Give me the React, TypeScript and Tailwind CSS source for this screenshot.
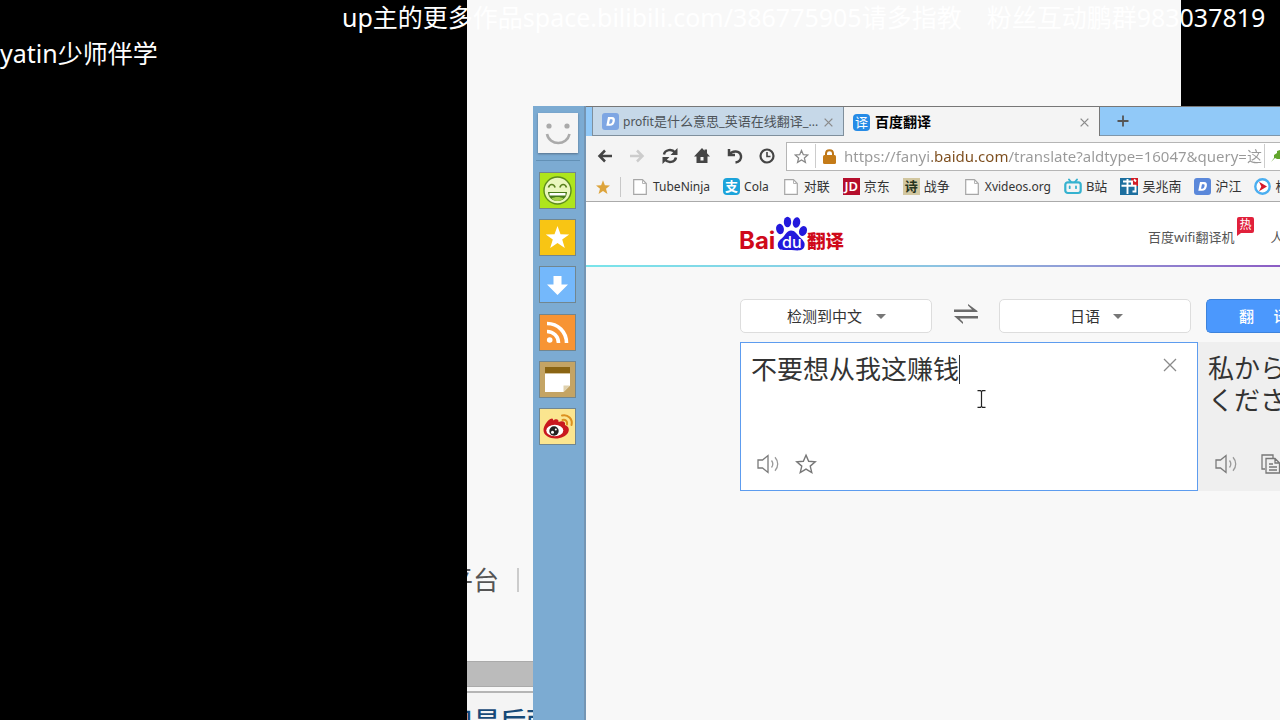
import React from "react";

const CJK = "font-['Noto_Sans','Noto_Sans_CJK_SC',sans-serif]";

function Danmaku({ children, className }: { children: React.ReactNode; className: string }) {
  return (
    <p className={"absolute z-20 flex gap-[25px] whitespace-pre text-[25px] leading-[34px] text-white " + className}>{children}</p>
  );
}

function PageIcon() {
  return (
    <svg width="18" height="16" viewBox="0 0 18 16" className="shrink-0" aria-hidden="true">
      <path d="M2.700.7h8.800l3.800 3.800v10.800H2.700z" fill="#fff" stroke="#a6a6a6" strokeWidth="1.200" />
      <path d="M11.500 .7v3.800h3.800" fill="none" stroke="#b5b5b5" />
    </svg>
  );
}

function HujiangIcon({ faded = false }: { faded?: boolean }) {
  return (
    <svg width="17" height="17" viewBox="0 0 17 17" className="shrink-0" aria-hidden="true">
      <rect width="17" height="17" rx="3" fill={faded ? "#7ea6e3" : "#5b88da"} />
      <path d="M6 4h4c2.400 0 3.300 1.600 2.800 4.200-.6 3-2.200 4.600-4.800 4.600H4.300zM8 6.300 7 10.700h1.300c1.200 0 1.900-.8 2.200-2.400.3-1.400 0-2-1.100-2z" fill="#fff" fillRule="evenodd" />
    </svg>
  );
}

function GlyphIcon({ glyph, className }: { glyph: string; className: string }) {
  return (
    <span aria-hidden="true" className={"flex size-[17px] shrink-0 items-center justify-center overflow-hidden text-[13px] leading-none " + className}>
      {glyph}
    </span>
  );
}

function BiliIcon() {
  return (
    <svg width="18" height="17" viewBox="0 0 18 17" className="shrink-0" fill="none" stroke="#35b2cf" strokeWidth="2.200" strokeLinecap="round" aria-hidden="true">
      <path d="m5 1.500 2 2.500M13 1.500 11 4" strokeWidth="2" />
      <rect x="1.300" y="4.300" width="15.400" height="10.700" rx="2.500" />
      <path d="M5.700 8.500v1.700M12 8.500v1.700" strokeWidth="1.800" />
    </svg>
  );
}

function BookIcon() {
  return (
    <svg width="18" height="17" viewBox="0 0 18 17" className="shrink-0" aria-hidden="true">
      <rect width="18" height="17" fill="#1d6f9f" />
      <path d="M11 0h7v8h-7z" fill="#d11c26" />
      <path d="M3 3.500h9v4M1.500 7.800h14v5.700h-3M7.500 1v15M14 1.500l2 2" fill="none" stroke="#fff" strokeWidth="1.900" />
    </svg>
  );
}

function PlayIcon() {
  return (
    <svg width="17" height="17" viewBox="0 0 17 17" className="shrink-0" aria-hidden="true">
      <circle cx="8.500" cy="8.500" r="7.200" fill="#fff" stroke="#4aaef0" strokeWidth="2.400" />
      <path d="M5 3.800 13 8.500l-8 4.700 2.300-4.700z" fill="#d6182c" />
    </svg>
  );
}

function StarOutline({ size, color, width }: { size: number; color: string; width: number }) {
  return (
    <svg width={size} height={size} viewBox="0 0 24 24" fill="none" stroke={color} strokeWidth={width} aria-hidden="true">
      <path d="m12 2.300 2.900 6.700 7.200.6-5.500 4.700 1.700 7.100-6.300-3.800-6.300 3.800 1.700-7.100L1.900 9.600l7.200-.6z" />
    </svg>
  );
}

function Speaker() {
  return (
    <svg width="22" height="20" viewBox="0 0 22 20" fill="none" stroke="#7a7a7a" strokeWidth="1.300" aria-hidden="true">
      <path d="M1 6h4.500L11 1.500v17L5.500 14H1z" />
      <path d="M14.500 6.500c1.600 2.100 1.600 4.900 0 7M18 3.200c3.600 4 3.600 9.600 0 13.600" stroke="#999" />
    </svg>
  );
}

function CloseIcon({ size, width }: { size: number; width: number }) {
  return (
    <svg width={size} height={size} viewBox="0 0 14 14" stroke="#8a8a8a" strokeWidth={width} aria-hidden="true">
      <path d="m1 1 12 12M13 1 1 13" />
    </svg>
  );
}

function SideButton({ label, className, children }: { label: string; className: string; children: React.ReactNode }) {
  return (
    <button aria-label={label} className={"flex size-[37px] items-center justify-center border border-[#71868f] " + className}>
      <svg width="35" height="35" viewBox="0 0 35 35" aria-hidden="true">{children}</svg>
    </button>
  );
}

function Sidebar() {
  return (
    <aside className="flex w-[53px] shrink-0 flex-col items-center border-r-2 border-[#7495b3] bg-[#7cabd2] pt-[7px] pr-[2px]">
      <button aria-label="账户" className="size-10 bg-[#f5f5f5] shadow-[0_1px_2px_#55708a]">
        <svg width="40" height="40" viewBox="0 0 40 40" aria-hidden="true">
          <circle cx="11" cy="13" r="2.600" fill="#aaa" />
          <circle cx="29" cy="13" r="2.600" fill="#aaa" />
          <path d="M9 21c2.500 12 20 12 22.500 0" fill="none" stroke="#aaa" strokeWidth="2.600" />
        </svg>
      </button>
      <hr className="mt-[7px] w-11 border-[#6290b5]" />
      <nav aria-label="侧边栏" className="mt-[11px] flex h-[273px] flex-col justify-between">
        <SideButton label="表情" className="bg-[#aee51d]">
          <circle cx="17.500" cy="17.500" r="13.500" fill="#eaf7be" stroke="#5d8c1c" strokeWidth="1.400" />
          <path d="M8.500 14.500c1.200-4 5.400-4 6.600 0M19.900 14.500c1.200-4 5.400-4 6.600 0" fill="none" stroke="#58801c" strokeWidth="1.600" />
          <path d="M8 19h19c-.5 12-18.500 12-19 0z" fill="#477a18" />
          <path d="M9.500 20h16v2.500h-16z" fill="#fff" />
          <path d="M11.500 25.500c3-2 9-2 12 0-3 3.200-9 3.200-12 0z" fill="#a5d14a" />
        </SideButton>
        <SideButton label="收藏" className="bg-[#f8c514]">
          <path d="m17.500 6 3 8.200 8.700.2-7 5.200 2.600 8.400-7.300-5-7.300 5 2.600-8.400-7-5.200 8.700-.2z" fill="#fff" />
        </SideButton>
        <SideButton label="下载" className="bg-[#74b8fb]">
          <path d="M13.500 9h8v8.500h6.500L17.500 28 7 17.500h6.500z" fill="#fff" />
        </SideButton>
        <SideButton label="订阅" className="bg-[#f79434]">
          <circle cx="9.700" cy="25" r="2.800" fill="#fff" />
          <path d="M7 16.500c6.500 0 11.500 5 11.500 11.500M7 8.500c11 0 19.500 8.500 19.500 19.500" fill="none" stroke="#fff" strokeWidth="3.600" />
        </SideButton>
        <SideButton label="便签" className="bg-[#c4a464]">
          <path d="M5 5h25v6.500H5z" fill="#8a6412" />
          <path d="M5 11.500h25v12L23.500 30H5z" fill="#fff" />
          <path d="M30 23.500 23.500 30v-6.500z" fill="#dfd1ae" />
        </SideButton>
        <SideButton label="微博" className="bg-[#fbe58f]">
          <path d="M13 11.500c3-2.300 6-1.500 5.500 1.500 4-1.800 7.500-.5 6.500 3 8 3 3 13.500-9.500 13.500-6 0-12-3-12-8.500 0-3.500 4-11 8.500-11.500 1 0 1.300 1 1 2z" fill="#c9181f" />
          <ellipse cx="14.800" cy="21.500" rx="8.500" ry="5.800" fill="#fff" />
          <circle cx="14" cy="22" r="4.700" fill="#222" />
          <circle cx="12.500" cy="23.300" r="1.500" fill="#fff" />
          <circle cx="15.800" cy="20.500" r="1" fill="#fff" />
          <path d="M22 6.500c6-1.500 11 3.500 9.500 9.500M22.500 11c3-.8 5.300 1.500 4.500 4.500" fill="none" stroke="#dc901f" strokeWidth="2" strokeLinecap="round" />
        </SideButton>
      </nav>
    </aside>
  );
}

function Tabs() {
  return (
    <div role="tablist" className="flex h-[30px] border-t border-[#777] bg-[#91c9f8] pl-[6px] text-xs">
      <div className="flex w-[252px] shrink-0 items-center border border-t-0 border-[#7f8f9c] bg-[#c6d8e8] pt-[2px] pr-[10px] pl-[9px]">
        <button role="tab" aria-selected="false" className="flex min-w-0 flex-1 items-center gap-1 text-left text-[#4d5358]">
          <HujiangIcon faded />
          <span className="whitespace-nowrap">profit<span className="text-[13px]">是什么意思_英语在线翻译_</span>...</span>
        </button>
        <button aria-label="关闭标签页"><CloseIcon size={9} width={2} /></button>
      </div>
      <div className="flex w-[256px] shrink-0 items-center border-r border-[#777] bg-[#f4f4f4] pt-[2px] pr-[10px] pl-[9px]">
        <button role="tab" aria-selected="true" className="flex flex-1 items-center gap-[5px] text-left text-[14px] font-bold text-black">
          <GlyphIcon glyph="译" className="rounded-sm bg-[#268be6] font-normal text-white" />
          百度翻译
        </button>
        <button aria-label="关闭标签页"><CloseIcon size={9} width={2} /></button>
      </div>
      <div className="flex flex-1 items-center border-b border-[#7f97ab] pl-[17px]">
        <button aria-label="新建标签页">
          <svg width="12" height="12" viewBox="0 0 12 12" stroke="#555" strokeWidth="1.800" aria-hidden="true"><path d="M6 .5v11M.5 6h11" /></svg>
        </button>
      </div>
    </div>
  );
}

function ToolButton({ label, color = "#444", children }: { label: string; color?: string; children: React.ReactNode }) {
  return (
    <button aria-label={label} className="shrink-0">
      <svg width="16" height="16" viewBox="0 0 16 16" fill="none" stroke={color} strokeWidth="2.500" aria-hidden="true">{children}</svg>
    </button>
  );
}

function Toolbar() {
  return (
    <div className="flex h-10 items-center bg-[#f4f4f4] pl-[11px]">
      <div className="flex w-[189px] shrink-0 justify-between pr-[11px]">
        <ToolButton label="后退"><path d="M15 8H3M8 2.500 2.500 8 8 13.500" /></ToolButton>
        <ToolButton label="前进" color="#ccc"><path d="M1 8h12M8 2.500 13.500 8 8 13.500" /></ToolButton>
        <ToolButton label="刷新">
          <path d="M2 6.500C3 1.500 10 .5 13 4.500M14 9.500c-1 5-8 6-11 2" />
          <path d="M15.500 0v7H8.500zM.5 16V9h7z" fill="#444" stroke="none" />
        </ToolButton>
        <ToolButton label="主页">
          <path d="M8 0 0 8.500h2.500V15h11V8.500H16L13 5.300V1.500h-2.500v1.200zM6.500 9h3v3.500h-3z" fill="#444" fillRule="evenodd" stroke="none" />
        </ToolButton>
        <ToolButton label="撤销"><path d="M2 1v6h6M2.500 6.500C5 2.500 13 2 14 8c.5 3-1.500 6-5.500 6.500" /></ToolButton>
        <ToolButton label="历史记录"><circle cx="8" cy="8" r="6.500" strokeWidth="2.200" /><path d="M8 4v4.500h3.500" strokeWidth="1.600" /></ToolButton>
      </div>
      <div className="flex h-[29px] min-w-0 flex-1 items-center border border-r-0 border-[#b5b5b5] bg-white pl-[7px]">
        <button aria-label="收藏此页" className="mr-[6px] shrink-0"><StarOutline size={15} color="#888" width={2} /></button>
        <span className="mr-[7px] h-6 w-px shrink-0 bg-[#ccc]" />
        <svg width="13" height="15" viewBox="0 0 13 15" className="mr-2 shrink-0" aria-hidden="true">
          <path d="M3 7V4.500c0-4.500 7-4.500 7 0V7" fill="none" stroke="#bd7516" strokeWidth="2" />
          <rect y="6" width="13" height="9" rx="1.500" fill="#c47b18" />
        </svg>
        <input
          aria-label="地址"
          defaultValue="https://fanyi.baidu.com/translate?aldtype=16047&query=这"
          className="min-w-0 flex-1 bg-[linear-gradient(90deg,#999_88px,#7d4d1c_88px,#7d4d1c_165px,#999_165px)] bg-clip-text text-[15px] text-transparent outline-none"
        />
        <span className="h-6 w-px shrink-0 bg-[#ccc]" />
        <svg width="9" height="15" viewBox="0 0 9 15" className="ml-[6px] shrink-0" aria-hidden="true">
          <path d="M0 13 3 9l0-3 3-2 0-2 3-1v9l-3 0-2-1z" fill="#62a52c" />
        </svg>
      </div>
    </div>
  );
}

function Bookmark({ icon, children, cjk = false }: { icon: React.ReactNode; children: React.ReactNode; cjk?: boolean }) {
  return <a href="#" className={"flex shrink-0 items-center gap-1 " + (cjk ? "text-[13px]" : "text-xs")}>{icon}{children}</a>;
}

function Bookmarks() {
  return (
    <nav aria-label="书签" className="flex h-[26px] items-center overflow-hidden border-b border-[#aaa] bg-[#f4f4f4] pb-1 pl-[9px] whitespace-nowrap text-[#333]">
      <svg width="16" height="16" viewBox="0 0 24 24" fill="#dda43c" className="shrink-0" aria-hidden="true">
        <path d="m12 2 2.800 7.300 7.700.4-6 5 2.200 7.800-6.700-4.400-6.700 4.400 2.200-7.800-6-5 7.700-.4z" />
      </svg>
      <span className="mr-[10px] ml-[9px] h-5 w-px shrink-0 bg-[#c8c8c8]" />
      <div className="flex h-[21px] gap-[13px]">
        <Bookmark icon={<PageIcon />}>TubeNinja</Bookmark>
        <Bookmark icon={<GlyphIcon glyph="支" className="rounded-sm bg-[#1ca3da] font-bold text-white" />}>Cola</Bookmark>
        <Bookmark cjk icon={<PageIcon />}>对联</Bookmark>
        <Bookmark cjk icon={<GlyphIcon glyph="JD" className="bg-[#b50e2c] font-semibold text-white" />}>京东</Bookmark>
        <Bookmark cjk icon={<GlyphIcon glyph="诗" className="bg-[#d2c7a0] font-bold text-[#26351f]" />}>战争</Bookmark>
        <Bookmark icon={<PageIcon />}>Xvideos.org</Bookmark>
        <Bookmark cjk icon={<BiliIcon />}>B站</Bookmark>
        <Bookmark cjk icon={<BookIcon />}>吴兆南</Bookmark>
        <Bookmark cjk icon={<HujiangIcon />}>沪江</Bookmark>
        <Bookmark cjk icon={<PlayIcon />}>杭</Bookmark>
      </div>
    </nav>
  );
}

function Logo() {
  return (
    <svg width="106" height="36" viewBox="0 0 106 36" role="img" aria-label="百度翻译">
      <text x="-1" y="33" fill="#cf0a1a" fontSize="24" fontWeight="700" fontFamily="Inter, sans-serif">Bai</text>
      <g fill="#2319dc">
        <ellipse cx="40" cy="13" rx="3.900" ry="5.200" transform="rotate(-12 40 13)" />
        <ellipse cx="47.500" cy="6" rx="3.700" ry="5.300" />
        <ellipse cx="56.500" cy="6.500" rx="3.700" ry="5.300" transform="rotate(12 56.500 6.500)" />
        <ellipse cx="63" cy="15" rx="3.900" ry="5" transform="rotate(20 63 15)" />
        <path d="M51 14.500c4 0 6 3.500 8.500 6.500 3 3 6 5 5 9-1.300 5.500-7 4.500-13 4s-12 1.500-13.500-3.500c-1-4.500 2-6.500 4.700-9C45.500 18.800 47 14.500 51 14.500z" />
      </g>
      <text x="42" y="32" fill="#fff" fontSize="16" fontWeight="500" fontFamily="Inter, sans-serif">du</text>
      <text x="67" y="32" fill="#cf0a1a" fontSize="18.500" fontWeight="900" fontFamily="Noto Sans CJK SC, sans-serif">翻译</text>
    </svg>
  );
}

function LanguageSelect({ label, value, className }: { label: string; value: string; className: string }) {
  return (
    <div className="relative w-[192px] shrink-0">
      <select aria-label={label} className={"block h-[34px] w-full appearance-none rounded-[5px] border border-[#ddd] bg-white text-[15px] text-[#333] " + className}>
        <option>{value}</option>
      </select>
      <svg width="10" height="5" viewBox="0 0 10 5" aria-hidden="true" className={"pointer-events-none absolute top-[15px] " + (value.length > 2 ? "left-[136px]" : "left-[114px]")}>
        <path d="M0 0h10L5 5z" fill="#777" />
      </svg>
    </div>
  );
}

function Translator() {
  return (
    <main className="flex-1 bg-[#f8f8f8] pt-8 pl-[154px]">
      <div className="flex items-center">
        <LanguageSelect label="源语言" value="检测到中文" className="pl-[46px]" />
        <button aria-label="交换语言" className="flex w-[67px] shrink-0 justify-center pb-[5px]">
          <svg width="24" height="20" viewBox="0 0 24 20" fill="#6a6a6a" aria-hidden="true">
            <path d="M0 5.500h18L14 1.500V0l9.500 7v1H0zM24 12H0l9 8v-2l-3.500-3.500H24z" />
          </svg>
        </button>
        <LanguageSelect label="目标语言" value="日语" className="pl-[70px]" />
        <button className="ml-[15px] h-[34px] min-w-0 flex-1 overflow-hidden rounded-l-[5px] border border-r-0 border-[#3d83dc] bg-[#4b98fd] pl-8 text-left text-[15px] font-medium whitespace-pre text-white">翻     译</button>
      </div>
      <div className="mt-[9px] flex h-[149px]">
        <section className="relative flex w-[458px] shrink-0 flex-col border border-[#5d9cef] bg-white pt-[10px] pr-5 pb-[15px] pl-[10px]">
          <div className="flex flex-1 items-start">
            <textarea aria-label="原文" defaultValue="不要想从我这赚钱" spellCheck={false} className="h-20 flex-1 resize-none overflow-hidden text-[26px] leading-8 text-[#333] outline-none" />
            <button aria-label="清空" className="mt-[5px]"><CloseIcon size={14} width={1.3} /></button>
          </div>
          <span className="absolute top-3 left-[218px] h-[29px] w-px bg-[#333]" />
          <svg width="9" height="18" viewBox="0 0 9 18" className="absolute top-[47px] left-[236px]" fill="none" stroke="#222" strokeWidth="1.200" aria-hidden="true">
            <path d="M.5.700h3l1 1 1-1h3M.5 17.300h3l1-1 1 1h3M4.500 1.500v15" />
          </svg>
          <div className="flex items-center gap-4 pl-[6px]">
            <button aria-label="朗读原文"><Speaker /></button>
            <button aria-label="收藏译文"><StarOutline size={22} color="#777" width={1.5} /></button>
          </div>
        </section>
        <section aria-label="译文" className="flex min-w-0 flex-1 flex-col justify-between overflow-hidden bg-[#efefef] pt-[9px] pb-[17px] pl-[10px]">
          <p lang="ja" className="font-['Noto_Sans_CJK_JP',sans-serif] text-[26px] leading-8 whitespace-nowrap text-[#333]">私から<br />くださ</p>
          <div className="flex items-center gap-6 pl-[7px]">
            <button aria-label="朗读译文" className="shrink-0"><Speaker /></button>
            <button aria-label="复制" className="shrink-0">
              <svg width="20" height="20" viewBox="0 0 20 20" fill="none" stroke="#777" strokeWidth="1.300" aria-hidden="true">
                <path d="M4 15H1V1h11v3M5 4.500h9l4.500 4.500v10H5zM14 4.500V9h4.500M8 10h4M8 13h8M8 16h8" />
              </svg>
            </button>
          </div>
        </section>
      </div>
    </main>
  );
}

export default function App() {
  return (
    <div className={"relative min-h-screen overflow-hidden bg-black " + CJK}>
      <section aria-label="后方窗口" className="absolute inset-y-0 right-[99px] left-[467px] flex flex-col justify-end overflow-hidden bg-[#f8f8f8]">
        <p className="-ml-[20px] flex items-center gap-[18px] text-[26px] leading-8 text-[#555]">
          平台<span className="h-6 w-[2px] bg-[#ccc]" />
        </p>
        <div className="mt-[65px] h-[26px] shrink-0 border-y border-[#aaa] bg-[#bbb]" />
        <div className="mt-1 h-[29px] shrink-0 overflow-hidden border-t-2 border-[#b5b5b5] bg-[#f4f4f4] pt-3">
          <p className="-ml-[19px] text-[26px] leading-8 font-medium whitespace-nowrap text-[#174a78]">只是后面</p>
        </div>
      </section>

      <section aria-label="浏览器" className="absolute top-[106px] right-0 bottom-0 left-[533px] flex overflow-hidden">
        <Sidebar />
        <div className="flex min-w-0 flex-1 flex-col">
          <Tabs />
          <Toolbar />
          <Bookmarks />
          <header className="flex h-[63px] shrink-0 items-center justify-between bg-white pl-[154px]">
            <Logo />
            <nav aria-label="站点导航" className="mt-[9px] flex w-[132px] gap-9 text-[13px] whitespace-nowrap text-[#555]">
              <a href="#" className="relative shrink-0">
                百度wifi翻译机
                <span className="absolute -top-[11px] left-[89px] flex h-4 w-[17px] items-center justify-center rounded-[2px] rounded-bl-none bg-[#e1213b] text-[12px] leading-none text-white">热</span>
                <svg width="4" height="3" viewBox="0 0 4 3" className="absolute top-[5px] left-[89px]" aria-hidden="true"><path d="M0 0h4L0 3z" fill="#e1213b" /></svg>
              </a>
              <a href="#" className="shrink-0">人工翻译</a>
            </nav>
          </header>
          <div className="h-[2px] shrink-0 bg-linear-to-r from-[#79e4ea] via-[#8cc4e2] via-50% to-[#8c5cc4]" />
          <Translator />
        </div>
      </section>

      <Danmaku className="top-0 left-[342px]">
        <span>up主的更多作品space.bilibili.com/386775905请多指教</span>
        <span>粉丝互动鹏群983037819</span>
      </Danmaku>
      <Danmaku className="top-9 left-0">yatin少师伴学</Danmaku>
    </div>
  );
}
